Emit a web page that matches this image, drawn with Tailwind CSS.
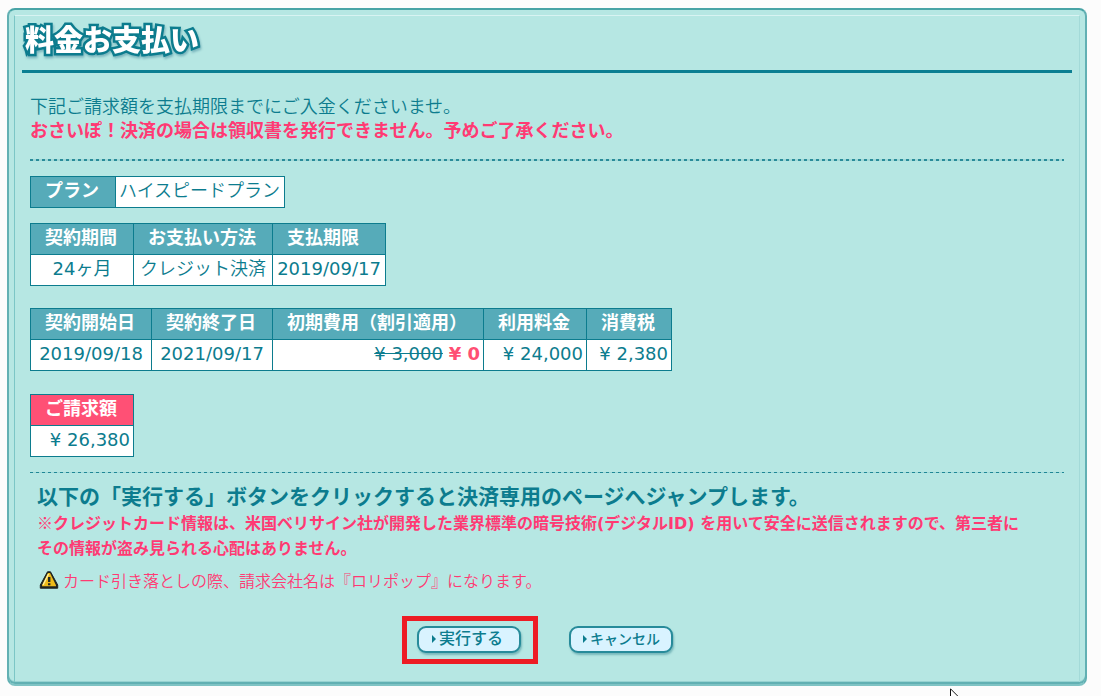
<!DOCTYPE html>
<html lang="ja">
<head>
<meta charset="utf-8">
<meta name="viewport" content="width=device-width, initial-scale=1">
<title>料金お支払い</title>
<script src="https://cdn.jsdelivr.net/npm/@tailwindcss/browser@4"></script>
</head>
<body class="bg-[#fcfcfc] pt-2 pr-3.5 pl-[7px] font-['DejaVu_Sans','Noto_Sans_CJK_JP',sans-serif] text-lg font-[350] leading-6 text-[#0c7c8e]">
<main class="relative rounded-lg border-2 border-t-[#48a4a6] border-r-[#62b0b3] border-b-[#7fc3c4] border-l-[#62b0b3] bg-[#b6e7e3] px-[5px] pt-[5px] pb-0.5 shadow-[inset_0_-2px_0_#62b0b3,inset_0_-3px_0_#98d3d2]">
  <div class="border-t border-r border-l border-t-[#d8f3f2] border-r-[#a3dad8] border-l-[#7cc6c6] px-[7px]">
    <header class="border-b-[3px] border-[#0b7f92] pb-2.5">
      <h1 class="pt-1.5 pl-[3px] text-[29px] leading-[38px] font-black text-white [-webkit-text-stroke:5px_#0c7c8e] [paint-order:stroke_fill] [stroke-linejoin:round] drop-shadow-[1px_2px_1px_rgba(60,130,150,0.5)]">料金お支払い</h1>
    </header>

    <div class="px-2 pt-[22px]">
      <p>下記ご請求額を支払期限までにご入金くださいませ。</p>
      <p class="font-bold text-[#ff3a73]">おさいぽ！決済の場合は領収書を発行できません。予めご了承ください。</p>
      <div class="mt-4 h-0.5 bg-[repeating-linear-gradient(90deg,#298b99_0_3px,#a0d8d7_3px_6px)]"></div>

      <table class="mt-[15px] border-collapse bg-white">
        <tr class="h-[31px]">
          <th scope="row" class="w-[85px] border border-[#0c7c8e] bg-[#56abb9] px-3.5 pb-0.5 text-left font-bold text-white whitespace-nowrap">プラン</th>
          <td class="w-[169px] border border-[#0c7c8e] px-[3px] pb-0.5 whitespace-nowrap">ハイスピードプラン</td>
        </tr>
      </table>

      <table class="mt-[15px] border-collapse bg-white text-center whitespace-nowrap">
        <thead>
          <tr class="h-[31px] bg-[#56abb9] text-left text-white">
            <th class="w-[103px] border border-[#0c7c8e] px-3.5 pb-0.5 font-bold">契約期間</th>
            <th class="w-[139px] border border-[#0c7c8e] px-3.5 pb-0.5 font-bold">お支払い方法</th>
            <th class="w-[113px] border border-[#0c7c8e] px-3.5 pb-0.5 font-bold">支払期限</th>
          </tr>
        </thead>
        <tbody>
          <tr class="h-[31px]">
            <td class="border border-[#0c7c8e] pb-0.5 font-normal">24ヶ月</td>
            <td class="border border-[#0c7c8e] pb-0.5">クレジット決済</td>
            <td class="border border-[#0c7c8e] pb-0.5 font-normal">2019/09/17</td>
          </tr>
        </tbody>
      </table>

      <table class="mt-[22px] border-collapse bg-white text-right whitespace-nowrap">
        <thead>
          <tr class="h-[31px] bg-[#56abb9] text-left text-white">
            <th class="w-[121px] border border-[#0c7c8e] px-3.5 pb-0.5 font-bold">契約開始日</th>
            <th class="w-[121px] border border-[#0c7c8e] px-3.5 pb-0.5 font-bold">契約終了日</th>
            <th class="w-[211px] border border-[#0c7c8e] px-3.5 pb-0.5 font-bold">初期費用（割引適用）</th>
            <th class="w-[103px] border border-[#0c7c8e] px-3.5 pb-0.5 font-bold">利用料金</th>
            <th class="w-[85px] border border-[#0c7c8e] px-3.5 pb-0.5 font-bold">消費税</th>
          </tr>
        </thead>
        <tbody>
          <tr class="h-[31px] font-normal">
            <td class="border border-[#0c7c8e] pb-0.5 text-center">2019/09/18</td>
            <td class="border border-[#0c7c8e] pb-0.5 text-center">2021/09/17</td>
            <td class="border border-[#0c7c8e] pr-[3px] pb-0.5"><s>¥ 3,000</s> <b class="font-bold text-[#ff4f74]">¥ 0</b></td>
            <td class="border border-[#0c7c8e] pr-[3px] pb-0.5">¥ 24,000</td>
            <td class="border border-[#0c7c8e] pr-[3px] pb-0.5">¥ 2,380</td>
          </tr>
        </tbody>
      </table>

      <table class="mt-[23px] border-collapse bg-white whitespace-nowrap">
        <thead>
          <tr class="h-[31px] bg-[#ff5075] text-left text-white">
            <th class="w-[103px] border border-[#0c7c8e] px-3.5 pb-0.5 font-bold">ご請求額</th>
          </tr>
        </thead>
        <tbody>
          <tr class="h-[31px] font-normal">
            <td class="border border-[#0c7c8e] pr-[3px] pb-0.5 text-right">¥ 26,380</td>
          </tr>
        </tbody>
      </table>

      <div class="mt-[15px] h-px bg-[repeating-linear-gradient(90deg,#1f8796_0_3px,#a0d8d7_3px_6px)]"></div>

      <section class="px-[7px] pt-3">
        <h2 class="text-[21px] leading-[25px] font-bold">以下の「実行する」ボタンをクリックすると決済専用のページへジャンプします。</h2>
        <p class="text-base leading-[25px] font-bold text-[#ff3a73]"><span class="font-['Noto_Sans_CJK_JP']">※</span>クレジットカード情報は、米国ベリサイン社が開発した業界標準の暗号技術(デジタルID) を用いて安全に送信されますので、第三者に<br>その情報が盗み見られる心配はありません。</p>
        <p class="mt-[9px] flex items-center gap-1 pl-0.5 text-base leading-6 text-[#ff3a73]">
          <svg class="mb-1 size-5 shrink-0" viewBox="0 0 20 20" aria-hidden="true">
            <path d="M8.5 1.8h3L18.7 15v3.2H1.3V15z" fill="#1f2420" stroke="#1f2420" stroke-linejoin="round"/>
            <path d="M9 3h2l6 12.2v1H3v-1z" fill="#eebb19"/>
            <path d="M9.5 4L4 15" stroke="#fff0a0" stroke-width="1.4"/>
            <path d="M9 7h2.4v5H9zM9 13.2h2.4v2H9z" fill="#252922"/>
          </svg>
          <span>カード引き落としの際、請求会社名は『ロリポップ』になります。</span>
        </p>
      </section>

      <form class="flex justify-center gap-12 pt-8 pr-1 pb-[29px]">
        <div class="relative flex">
          <button type="button" class="flex h-[27px] w-[104px] items-center justify-center gap-0.5 rounded-[9px] border-2 border-[#278b9a] bg-[#d9f3ff] pr-1 pb-0.5 text-base leading-5 font-medium whitespace-nowrap shadow-[1px_2px_2px_rgba(60,140,150,0.5)]">
            <svg class="h-2 w-1.5" viewBox="0 0 6 8" aria-hidden="true"><path d="M1 0l4 4-4 4z" fill="#0c7c8e"/></svg>実行する</button>
          <div class="pointer-events-none absolute -top-2.5 -right-[17px] -bottom-[11px] -left-[15px] border-[5px] border-[#ed1c24]"></div>
        </div>
        <button type="button" class="flex h-[27px] w-[104px] items-center justify-center gap-0.5 rounded-[9px] border-2 border-[#278b9a] bg-[#d9f3ff] pb-0.5 text-sm leading-5 font-medium whitespace-nowrap shadow-[1px_2px_2px_rgba(60,140,150,0.5)]">
          <svg class="h-2 w-1.5" viewBox="0 0 6 8" aria-hidden="true"><path d="M1 0l4 4-4 4z" fill="#0c7c8e"/></svg>キャンセル</button>
      </form>
    </div>
  </div>
</main>

<!-- mouse pointer -->
<svg class="absolute top-[688px] left-[950px] h-2 w-3" viewBox="0 0 12 8" aria-hidden="true"><path d="M.5 9V.8L9 9.3" fill="#fff" stroke="#111"/></svg>
</body>
</html>
